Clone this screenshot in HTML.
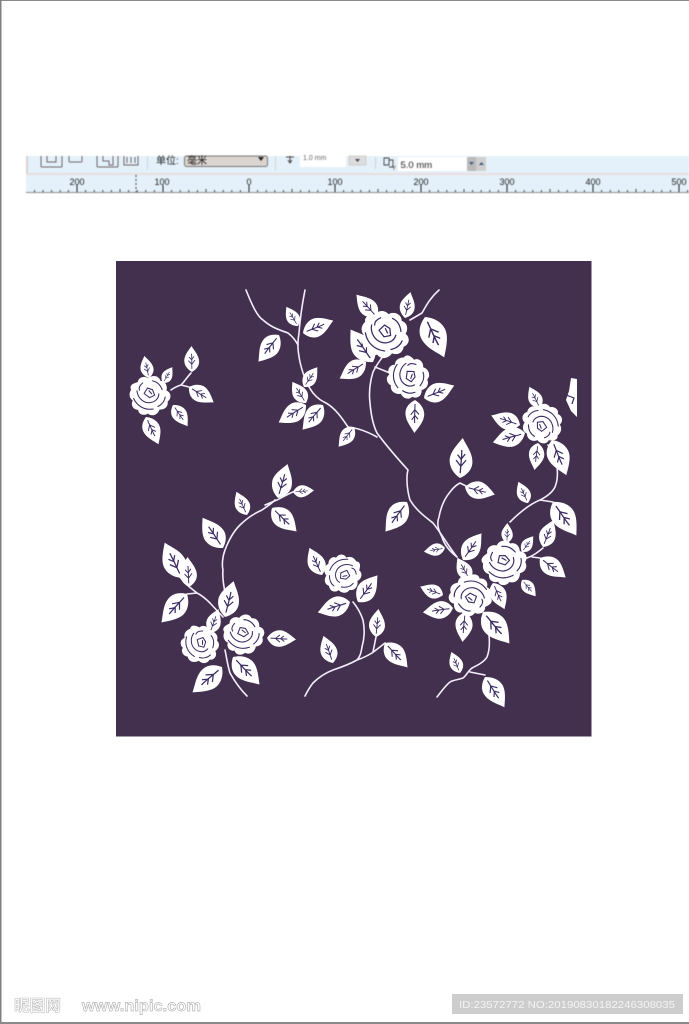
<!DOCTYPE html>
<html><head><meta charset="utf-8"><style>
html,body{margin:0;padding:0;background:#fff}
#p{position:relative;width:689px;height:1024px;overflow:hidden;background:#fff;font-family:"Liberation Sans","Noto Sans CJK SC",sans-serif}
svg{position:absolute;left:0;top:0}
</style></head><body><div id="p">
<svg width="689" height="1024" viewBox="0 0 689 1024">
<defs>
<g id="l">
<path fill="#fff" d="M0 0C-.13 -.08 -.27 -.22 -.28 -.42C-.29 -.62 -.12 -.82 .02 -1C.1 -.84 .29 -.64 .29 -.4C.29 -.2 .14 -.07 0 0Z"/>
<path fill="none" stroke="#3b2a63" stroke-width=".032" d="M0 -.12C0 -.3 .02 -.5 .01 -.7M0 -.3L-.12 -.44M.01 -.3L.13 -.45M.01 -.46L-.09 -.58M.01 -.48L.1 -.6"/>
</g>
<g id="r">
<path fill="#fff" d="M-.9 -.3C-1.02 -.55 -.72 -.62 -.58 -.66C-.56 -.9 -.25 -.98 -.08 -.84C.1 -1.02 .42 -.98 .5 -.72C.78 -.7 .84 -.42 .78 -.26C1.02 -.16 1.04 .12 .84 .26C.88 .52 .68 .66 .46 .64C.36 .9 .1 1 -.1 .84C-.28 .96 -.56 .88 -.56 .66C-.8 .66 -.94 .42 -.82 .22C-1.02 .08 -1 -.16 -.9 -.3Z"/>
<path fill="none" stroke="#3b2a63" stroke-width=".05" stroke-linecap="round" d="M-.78 .12C-.6 .5 -.25 .68 .15 .62M.72 .05C.7 .25 .55 .42 .38 .5M-.62 -.25C-.6 .05 -.35 .32 -.05 .32C.2 .32 .42 .15 .42 -.1M-.35 -.62C-.5 -.5 -.55 -.4 -.5 -.28M.12 -.72C.35 -.68 .5 -.5 .58 -.3M-.28 -.12L-.02 .08L.22 -.04L.12 -.3L-.12 -.38ZM-.05 -.25L.08 -.1"/>
</g>
</defs>

<!-- page border -->
<rect x="0" y="0" width="689" height="1" fill="#8a8a8a"/>
<rect x="0" y="0" width="1.5" height="1024" fill="#808080"/>
<rect x="0" y="1022" width="689" height="2" fill="#8a8a8a"/>

<!-- toolbar -->
<g style="filter:blur(.45px)">
<rect x="26" y="156" width="663" height="17" fill="#e4f1fa"/>
<rect x="26" y="173" width="663" height="2" fill="#e9dfdb"/>
<rect x="26" y="175" width="663" height="17" fill="#e4f1fa"/>
<rect x="26" y="156" width="2" height="17" fill="#dcd3cf"/>
<path fill="none" stroke="#6f6668" d="M41 156V166Q41 167 42 167H61Q62 167 62 166V156M47 156V162H56V156M69 156V161Q69 162 70 162H81Q82 162 82 161V156M97 156V166Q97 167 98 167H117Q118 167 118 166V156M103 156V161H109V165H113V156M124 156V165H138V156M127 157V163M131 157V163M135 157V163"/>
<rect x="147" y="156" width="1" height="14" fill="#cfd5da"/>
<text x="156" y="164" font-size="10" fill="#222">单位:</text>
<rect x="184.500" y="156" width="83" height="10.500" rx="2" fill="#dcd4cf" stroke="#77777a"/>
<text x="187" y="164" font-size="10" fill="#111">毫米</text>
<path d="M258 157H264L261 161Z" fill="#222"/>
<rect x="275" y="156" width="1" height="14" fill="#d5d2d2"/>
<path fill="none" stroke="#444" d="M286 157H294M290 156V163M288 160L290 163L292 160"/>
<rect x="300" y="156" width="46" height="11" fill="#fff"/>
<text x="303" y="160" font-size="7" fill="#666">1.0 mm</text>
<rect x="349" y="156" width="17" height="9" fill="#dcdcdc" stroke="#c9c3c0" stroke-width=".7"/>
<path d="M355 159H360L357.500 162Z" fill="#445"/>
<rect x="375" y="157" width="1" height="12" fill="#d3d0cf"/>
<path fill="none" stroke="#444" stroke-width=".9" d="M384 158H389V165H384ZM389 160H393V167H389"/>
<text x="392" y="170" font-size="6" fill="#333">Y</text>
<rect x="398" y="157" width="69" height="14" fill="#fff"/>
<text x="400.500" y="168" font-size="9.500" fill="#222">5.0 mm</text>
<rect x="467" y="157" width="9" height="14" fill="#b9b9b9"/>
<rect x="476" y="157" width="10" height="14" fill="#cfcfcf"/>
<path d="M469 162H474L471.500 165ZM479 165H484L481.500 162Z" fill="#445a88"/>
<!-- ruler -->
<g font-size="9" fill="#222" text-anchor="middle">
<text x="77" y="185">200</text><text x="162" y="185">100</text><text x="249" y="185">0</text><text x="335" y="185">100</text><text x="421" y="185">200</text><text x="507" y="185">300</text><text x="593" y="185">400</text><text x="679" y="185">500</text>
</g>
<path stroke="#222" stroke-width="1" d="M77 185V192M163 185V192M249 185V192M335 185V192M421 185V192M507 185V192M593 185V192M679 185V192"/>
<path stroke="#444" stroke-width="1" d="M34.500 190V192M43 190V192M51.600 190V192M60.200 190V192M68.400 190V192M85.600 190V192M94.200 190V192M102.800 190V192M111.400 190V192M120 189V192M128.600 190V192M137.200 190V192M145.800 190V192M154.400 190V192M171.600 190V192M180.200 190V192M188.800 190V192M197.400 190V192M206 189V192M214.600 190V192M223.200 190V192M231.800 190V192M240.400 190V192M257.600 190V192M266.200 190V192M274.800 190V192M283.400 190V192M292 189V192M300.600 190V192M309.200 190V192M317.800 190V192M326.400 190V192M343.600 190V192M352.200 190V192M360.800 190V192M369.400 190V192M378 189V192M386.600 190V192M395.200 190V192M403.800 190V192M412.400 190V192M429.600 190V192M438.200 190V192M446.800 190V192M455.400 190V192M464 189V192M472.600 190V192M481.200 190V192M489.800 190V192M498.400 190V192M515.600 190V192M524.200 190V192M532.800 190V192M541.400 190V192M550 189V192M558.600 190V192M567.200 190V192M575.800 190V192M584.400 190V192M601.600 190V192M610.200 190V192M618.800 190V192M627.400 190V192M636 189V192M644.600 190V192M653.200 190V192M661.800 190V192M670.400 190V192M687.600 190V192"/>
<path stroke="#444" stroke-dasharray="2 2" d="M136 175V192"/>
<rect x="26" y="192" width="663" height="1" fill="#8d8d8d"/>
</g>

<!-- panel -->
<rect x="116" y="261" width="475.500" height="475.500" fill="#432f4e"/>

<g style="filter:blur(.3px)">
<!-- stems -->
<g fill="none" stroke="#f2eefb" stroke-width="1.600" stroke-linecap="round" stroke-linejoin="round">
<path d="M171 390C175 387 178 386 181 385C185 381 188 376 191 373M181 385L189 387"/>
<path d="M246 290C252 305 257 316 263 320C272 328 280 330 288 333C293 337 296 341 298 345"/>
<path d="M305 290C302 305 300 320 299 333C297 345 298 352 300 362C303 375 307 385 313 393C318 399 322 401 326 403C335 408 342 418 348 427"/>
<path d="M348 427C358 428 368 432 377 437"/>
<path d="M439 290C430 298 426 306 422 313L410 320M400 338C385 352 378 362 373 372C369 385 369 395 370 403C371 415 373 425 377 433C388 448 398 459 408 470C406 477 407 490 410 500C416 510 424 516 433 523C441 533 449 547 457 557"/>
<path d="M375 367L390 373"/>
<path d="M457 557C448 550 444 544 442 537C437 528 437 522 439 517C441 506 445 498 450 492C453 488 456 485 460 483L468 487"/>
<path d="M548 445C553 452 556 459 557 467C558 475 557 482 555 487C552 493 546 497 540 500C530 504 520 512 510 522"/>
<path d="M527 558C533 556 538 552 543 548M540 558L532 557"/>
<path d="M540 500L553 502"/>
<path d="M482 618C484 625 487 630 489 635C490 645 489 652 487 657C484 662 478 665 472 668C468 671 466 676 463 678C457 680 453 680 450 682C445 686 441 692 437 697M470 672L485 675"/>
<path d="M489 635L492 628"/>
<path d="M275 500C270 505 266 507 262 510C253 514 246 519 240 525C232 533 228 542 225 550C222 558 222 566 223 570C222 578 224 586 225 593M265 505L277 500C283 497 288 494 293 492"/>
<path d="M180 577C186 585 192 589 197 593C203 596 207 600 210 603L223 617M187 594L197 593"/>
<path d="M225 650C227 660 228 667 230 673C235 682 241 690 247 696"/>
<path d="M353 602C358 608 361 614 363 620C365 630 364 640 362 647C361 653 360 657 357 660C350 664 342 667 333 670C325 673 318 678 313 683C309 688 307 692 305 696M357 660C363 658 367 656 372 653C376 650 380 647 385 643M373 652L376 637"/>
</g>
<!-- leaves -->
<use href="#l" transform="matrix(26 -1 1 26 192 372)"/>
<use href="#l" transform="matrix(-15 25 -25 -15 189 387)"/>
<use href="#l" transform="matrix(22 -5 5 22 149 378)"/>
<use href="#l" transform="matrix(16 9 -9 16 163 383)"/>
<use href="#l" transform="matrix(-27 13 -13 -27 146 417)"/>
<use href="#l" transform="matrix(-21 15 -15 -21 173 405)"/>
<use href="#l" transform="matrix(19 -12 12 19 298 326)"/>
<use href="#l" transform="matrix(13 30 -30 13 303 333)"/>
<use href="#l" transform="matrix(-27 -20 20 -27 279 335)"/>
<use href="#l" transform="matrix(20 13 -13 20 304 387)"/>
<use href="#l" transform="matrix(21 -14 14 21 306 403)"/>
<use href="#l" transform="matrix(-18 -27 27 -18 306 405)"/>
<use href="#l" transform="matrix(-25 -20 20 -25 323 405)"/>
<use href="#l" transform="matrix(-20 -15 15 -20 354 427)"/>
<use href="#l" transform="matrix(22 -21 21 22 377 317)"/>
<use href="#l" transform="matrix(26 5 -5 26 405 318)"/>
<use href="#l" transform="matrix(-40 20 -20 -40 425 317)"/>
<use href="#l" transform="matrix(32 -23 23 32 373 362)"/>
<use href="#l" transform="matrix(-17 -26 26 -17 366 362)"/>
<use href="#l" transform="matrix(-33 0 0 -33 415 400)"/>
<use href="#l" transform="matrix(13 30 -30 13 424 398)"/>
<use href="#l" transform="matrix(21 -11 11 21 540 408)"/>
<use href="#l" transform="matrix(9 -29 29 9 520 425)"/>
<use href="#l" transform="matrix(-10 -32 32 -10 525 433)"/>
<use href="#l" transform="matrix(-27 -3 3 -27 538 443)"/>
<use href="#l" transform="matrix(-35 15 -15 -35 552 440)"/>
<use href="#l" transform="matrix(21 -10 10 21 528 503)"/>
<use href="#l" transform="matrix(-33 24 -24 -33 553 502)"/>
<use href="#l" transform="matrix(27 10 -10 27 543 547)"/>
<use href="#l" transform="matrix(-19 26 -26 -19 540 558)"/>
<use href="#l" transform="matrix(20 0 0 20 507 543)"/>
<use href="#l" transform="matrix(16 11 -11 16 522 552)"/>
<use href="#l" transform="matrix(-16 14 -14 -16 522 580)"/>
<use href="#l" transform="matrix(-26 12 -12 -26 493 583)"/>
<use href="#l" transform="matrix(27 18 -18 27 463 560)"/>
<use href="#l" transform="matrix(22 -13 13 22 470 580)"/>
<use href="#l" transform="matrix(8 -23 23 8 443 595)"/>
<use href="#l" transform="matrix(-5 -30 30 -5 453 608)"/>
<use href="#l" transform="matrix(-30 -2 2 -30 465 612)"/>
<use href="#l" transform="matrix(-31 27 -27 -31 483 612)"/>
<use href="#l" transform="matrix(21 -9 9 21 460 673)"/>
<use href="#l" transform="matrix(-30 20 -20 -30 485 677)"/>
<use href="#l" transform="matrix(-4 -21 21 -4 445 548)"/>
<use href="#l" transform="matrix(40 2 -2 40 460 478)"/>
<use href="#l" transform="matrix(-7 30 -30 -7 465 487)"/>
<use href="#l" transform="matrix(-30 -21 21 -30 407 502)"/>
<use href="#l" transform="matrix(34 9 -9 34 278 498)"/>
<use href="#l" transform="matrix(2 21 -21 2 293 492)"/>
<use href="#l" transform="matrix(-23 25 -25 -23 272 508)"/>
<use href="#l" transform="matrix(23 -11 11 23 247 515)"/>
<use href="#l" transform="matrix(30 -21 21 30 223 548)"/>
<use href="#l" transform="matrix(35 -18 18 35 182 578)"/>
<use href="#l" transform="matrix(30 -2 2 30 189 587)"/>
<use href="#l" transform="matrix(-29 -25 25 -29 187 594)"/>
<use href="#l" transform="matrix(36 8 -8 36 225 617)"/>
<use href="#l" transform="matrix(24 8 -8 24 210 633)"/>
<use href="#l" transform="matrix(-1 29 -29 -1 267 638)"/>
<use href="#l" transform="matrix(-27 27 -27 -27 233 657)"/>
<use href="#l" transform="matrix(-26 -29 29 -26 222 667)"/>
<use href="#l" transform="matrix(27 -13 13 27 322 575)"/>
<use href="#l" transform="matrix(27 19 -19 27 358 602)"/>
<use href="#l" transform="matrix(-11 -32 32 -11 350 602)"/>
<use href="#l" transform="matrix(28 2 -2 28 376 637)"/>
<use href="#l" transform="matrix(-24 23 -23 -24 385 643)"/>
<use href="#l" transform="matrix(27 -10 10 27 333 663)"/>
<!-- cut-off leaf at right -->
<path fill="#fff" d="M571 378L577 379L577 417L571 411L566 400L569 391Z"/>
<path fill="none" stroke="#3b2a63" stroke-width="1.200" d="M566 395L574 398L572 404"/>
<!-- roses -->
<use href="#r" transform="translate(150 396) scale(21)"/>
<use href="#r" transform="translate(385 335) rotate(15) scale(25)"/>
<use href="#r" transform="translate(408 378) rotate(60) scale(22)"/>
<use href="#r" transform="translate(542 423) rotate(200) scale(21)"/>
<use href="#r" transform="translate(505 563) rotate(-20) scale(23)"/>
<use href="#r" transform="translate(470 595) rotate(170) scale(22)"/>
<use href="#r" transform="translate(200 645) rotate(40) scale(20)"/>
<use href="#r" transform="translate(244 635) rotate(-10) scale(21)"/>
<use href="#r" transform="translate(342 574) rotate(120) scale(20)"/>
</g>

<!-- watermark -->
<text x="14" y="1011" font-size="16" textLength="47" lengthAdjust="spacingAndGlyphs" font-family="'Noto Sans CJK SC','Liberation Sans',sans-serif" font-weight="700" fill="#fff" stroke="#bdbdbd" stroke-width=".6">昵图网</text>
<text x="82" y="1011" font-size="16" textLength="119" lengthAdjust="spacingAndGlyphs" font-family="'Liberation Sans',sans-serif" font-weight="700" fill="#fff" stroke="#b8b8b8" stroke-width=".7">www.nipic.com</text>
<rect x="452" y="994" width="231" height="20" fill="#cdcdcd"/>
<text x="459" y="1008" font-size="10.500" textLength="216" lengthAdjust="spacingAndGlyphs" font-family="'Liberation Sans',sans-serif" fill="#f4f4f4">ID:23572772 NO:20190830182246308035</text>
</svg>
</div></body></html>
